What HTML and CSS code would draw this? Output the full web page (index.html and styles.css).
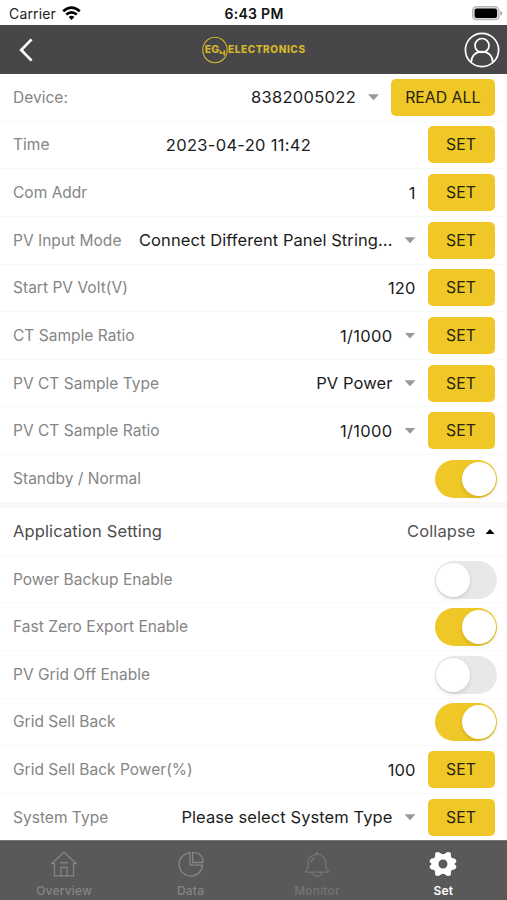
FILE: index.html
```html
<!DOCTYPE html>
<html lang="en">
<head>
<meta charset="utf-8">
<title>Settings</title>
<link rel="stylesheet" href="styles.css">
</head>
<body>
<div class="app">
  <div class="status">
    <div class="carrier"><span>Carrier</span>
      <svg width="19" height="15" viewBox="0 0 19 15" fill="none" stroke="#000" stroke-width="2.6"><path d="M1.2 5.2Q9.5 -2 17.8 5.2M4.2 8.6Q9.5 4 14.8 8.6"/><path d="M9.5 14 6.6 11Q9.5 8.6 12.4 11Z" fill="#000" stroke="none"/></svg>
    </div>
    <div class="clock">6:43 PM</div>
    <svg class="battery" width="31" height="15" viewBox="0 0 31 15"><rect x=".7" y=".7" width="26.2" height="13" rx="3.8" fill="#ddd" stroke="#b5b5b5" stroke-width="1.3"/><rect x="2.6" y="2.5" width="22.4" height="9.4" rx="2" fill="#000"/><path d="M28.2 5v4.6q2-.6 2-2.3t-2-2.3Z" fill="#aaa"/></svg>
  </div>
  <header class="header">
    <svg width="14" height="24" viewBox="0 0 14 24" fill="none" stroke="#fff" stroke-width="2.7"><path d="M12.6 1.4 2.2 12l10.4 10.6"/></svg>
    <svg class="logo" width="106" height="28" viewBox="0 0 106 28"><path d="M1.3 10.2A12.1 12.1 0 0 1 24.7 10.2M1.3 17.8A12.1 12.1 0 0 0 24.7 17.8M1.3 10.2Q.3 14 1.3 17.8M24.7 10.2q1 3.8 0 7.6" fill="none" stroke="#d5b62a" stroke-width="1.1"/><g class="logo-text"><text x="2.8" y="17.4" textLength="14.2" lengthAdjust="spacingAndGlyphs">EG</text><path d="M18.3 14.2v2.7h4.2M22.4 14.2v5.6" fill="none" stroke="#d5b62a" stroke-width="1.5"/><text x="26" y="17.4" textLength="77" lengthAdjust="spacing">ELECTRONICS</text></g></svg>
    <svg width="36" height="36" viewBox="0 0 36 36" fill="none" stroke="#fff" stroke-width="1.7"><circle cx="18" cy="18" r="16.6"/><circle cx="18" cy="13.5" r="7"/><path d="M7.2 30.3C7.2 24 11.5 19.6 18 19.6S28.8 24 28.8 30.3"/></svg>
  </header>
  <main class="list">
    <div class="row"><span class="label">Device:</span><span class="value numeric">8382005022</span><i class="caret"></i><button class="btn wide">READ ALL</button></div>
    <div class="row"><span class="label">Time</span><span class="value numeric centered">2023-04-20 11:42</span><button class="btn">SET</button></div>
    <div class="row"><span class="label">Com Addr</span><span class="value">1</span><button class="btn">SET</button></div>
    <div class="row"><span class="label">PV Input Mode</span><span class="value">Connect Different Panel String...</span><i class="caret"></i><button class="btn">SET</button></div>
    <div class="row"><span class="label">Start PV Volt(V)</span><span class="value">120</span><button class="btn">SET</button></div>
    <div class="row"><span class="label">CT Sample Ratio</span><span class="value numeric">1/1000</span><i class="caret"></i><button class="btn">SET</button></div>
    <div class="row"><span class="label">PV CT Sample Type</span><span class="value">PV Power</span><i class="caret"></i><button class="btn">SET</button></div>
    <div class="row"><span class="label">PV CT Sample Ratio</span><span class="value numeric">1/1000</span><i class="caret"></i><button class="btn">SET</button></div>
    <div class="row"><span class="label">Standby / Normal</span><span class="toggle on"></span></div>
    <div class="band"></div>
    <div class="row"><span class="title">Application Setting</span><span class="collapse">Collapse</span><i class="caret up"></i></div>
    <div class="row"><span class="label">Power Backup Enable</span><span class="toggle"></span></div>
    <div class="row"><span class="label">Fast Zero Export Enable</span><span class="toggle on"></span></div>
    <div class="row"><span class="label">PV Grid Off Enable</span><span class="toggle"></span></div>
    <div class="row"><span class="label">Grid Sell Back</span><span class="toggle on"></span></div>
    <div class="row"><span class="label">Grid Sell Back Power(%)</span><span class="value">100</span><button class="btn">SET</button></div>
    <div class="row"><span class="label">System Type</span><span class="value">Please select System Type</span><i class="caret"></i><button class="btn">SET</button></div>
  </main>
  <nav class="tabs">
    <div class="tab"><svg width="28" height="28" viewBox="0 0 28 28"><path d="M4.5 13.5H1.8L14 2.2l12.2 11.3h-2.7v12.3h-19ZM11 25.5v-8h6v8M10 12.7h8"/></svg><span>Overview</span></div>
    <div class="tab"><svg width="28" height="28" viewBox="0 0 28 28"><path d="M13 2.7A11.7 11.7 0 1 0 25.5 15.2H13ZM15.6 2.4v10.1h10.1V8.5Q23 2.4 15.6 2.4Z"/></svg><span>Data</span></div>
    <div class="tab dim"><svg width="28" height="28" viewBox="0 0 28 28"><path d="M5.3 17.7V13a8.7 8.7 0 0 1 17.4 0v4.7l2.5 3v1.5H2.8v-1.5ZM12.5 4.4 14 2.3l1.5 2.1M9 22.5q1.2 3.7 5 3.7t5-3.7M8.2 12.8q.2-3.4 3.3-5.2"/></svg><span>Monitor</span></div>
    <div class="tab active"><svg width="28" height="28" viewBox="0 0 28 28"><path fill-rule="evenodd" d="M10 2.2Q8.5 1.4 6.2 3.1L6 6.6Q5.7 8 4.1 8.3L2 8.8Q.3 10.2 .7 12L2.7 14 .7 16Q.3 17.8 2 19.2L4.1 19.7Q5.7 20 6 21.4L6.2 24.9Q8.5 26.6 10 25.8L12 24.4Q14 23.2 16 24.4L18 25.8Q19.5 26.6 21.8 24.9L22 21.4Q22.3 20 23.9 19.7L26 19.2Q27.7 17.8 27.3 16L25.3 14 27.3 12Q27.7 10.2 26 8.8L23.9 8.3Q22.3 8 22 6.6L21.8 3.1Q19.5 1.4 18 2.2L16 3.6Q14 4.8 12 3.6ZM14 9.5a4.5 4.5 0 1 1 0 9 4.5 4.5 0 0 1 0-9Z"/></svg><span>Set</span></div>
  </nav>
</div>
</body>
</html>
```
FILE: styles.css
```css
* { box-sizing: border-box; }
body { margin: 0; background: #fff; font-family: Inter, "Liberation Sans", sans-serif; }
.app { width: 507px; height: 900px; display: flex; flex-direction: column; overflow: hidden; }
.status { height: 25px; flex: none; display: grid; grid-template-columns: 1fr auto 1fr; align-items: center; padding: 2px 8px 0 9px; font-size: 14px; color: #222; }
.carrier { display: flex; align-items: center; gap: 6px; letter-spacing: .15px; }
.clock { font-weight: 600; color: #111; letter-spacing: .3px; }
.battery { justify-self: end; margin-right: -4px; }
.header { height: 49px; flex: none; background: #474749; display: flex; align-items: center; justify-content: space-between; padding: 0 7px 0 19px; }
.logo { margin-left: 12px; }
.logo-text { font-family: Inter, sans-serif; font-size: 10px; font-weight: 800; fill: #d5b62a; }
.list { flex: 1; min-height: 0; overflow: hidden; }
.row { height: 47.65px; display: flex; align-items: center; padding: 0 12.5px 0 13px; border-bottom: 1px solid #f9f9f9; font-size: 16px; white-space: nowrap; }
.label { color: #858585; font-size: 15.5px; letter-spacing: .02px; }
.title { color: #4c4c4c; flex: 1; font-size: 16.5px; letter-spacing: .13px; }
.collapse { color: #555; font-size: 16.5px; letter-spacing: .1px; }
.value { flex: 1; text-align: right; color: #1c1c1c; font-size: 16.5px; letter-spacing: .08px; }
.numeric { letter-spacing: .3px; }
.centered { text-align: center; margin-right: -12px; }
.btn { width: 67px; height: 37px; flex: none; margin-left: 12px; padding: 0; border: 0; border-radius: 5px; background: #efc827; color: #29230d; font: 15.8px Inter, sans-serif; }
.wide { width: 103.5px; }
.caret { width: 11px; height: 6px; flex: none; margin-left: 12px; background: #999; clip-path: polygon(0 0, 100% 0, 50% 100%); }
.up { width: 9px; height: 5px; margin-left: 10px; background: #000; clip-path: polygon(50% 0, 100% 100%, 0 100%); }
.toggle { width: 62px; height: 38px; flex: none; margin: 1px -2.5px 0 auto; padding: 2px 1px; border-radius: 19px; background: #e8e8ea; display: flex; }
.toggle::after { content: ""; width: 34px; height: 34px; border-radius: 50%; background: #fff; box-shadow: 0 2px 4px rgba(0,0,0,.12); }
.on { background: #efc827; justify-content: flex-end; }
.band { height: 5.3px; background: #f7f7f7; }
.tabs { height: 60px; flex: none; background: #59595a; border-top: 1px solid #777; display: grid; grid-template-columns: repeat(4, 126.4px); }
.tab { display: flex; flex-direction: column; align-items: center; padding: 9px 0 0 2px; color: #858586; font-size: 12px; font-weight: 500; line-height: 15px; gap: 5px; letter-spacing: .2px; }
.tab svg { fill: none; stroke: currentColor; stroke-width: 1.3; }
.dim { color: #747476; }
.active { color: #fff; font-weight: 600; }
.active svg { fill: #fff; stroke: none; }
```
